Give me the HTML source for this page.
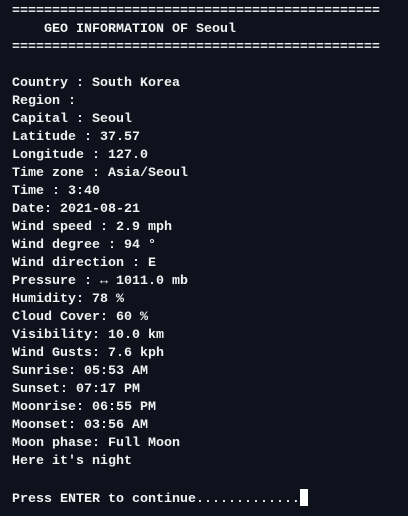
<!DOCTYPE html>
<html><head><style>
html,body{margin:0;padding:0;background:#0f111d;width:408px;height:516px;overflow:hidden}
pre{margin:0;position:absolute;left:12px;top:3px;font-family:"Liberation Mono",monospace;font-size:13.33px;line-height:18px;color:#f2f2f2;font-weight:bold}
.c{display:inline-block;width:8px;height:17px;background:#fff;vertical-align:-4px}
</style></head><body>
<pre>==============================================
    GEO INFORMATION OF Seoul
==============================================

Country : South Korea
Region : 
Capital : Seoul
Latitude : 37.57
Longitude : 127.0
Time zone : Asia/Seoul
Time : 3:40
Date: 2021-08-21
Wind speed : 2.9 mph
Wind degree : 94 °
Wind direction : E
Pressure : ↔ 1011.0 mb
Humidity: 78 %
Cloud Cover: 60 %
Visibility: 10.0 km
Wind Gusts: 7.6 kph
Sunrise: 05:53 AM
Sunset: 07:17 PM
Moonrise: 06:55 PM
Moonset: 03:56 AM
Moon phase: Full Moon
Here it's night

Press ENTER to continue.............<span class="c"></span></pre>
</body></html>
